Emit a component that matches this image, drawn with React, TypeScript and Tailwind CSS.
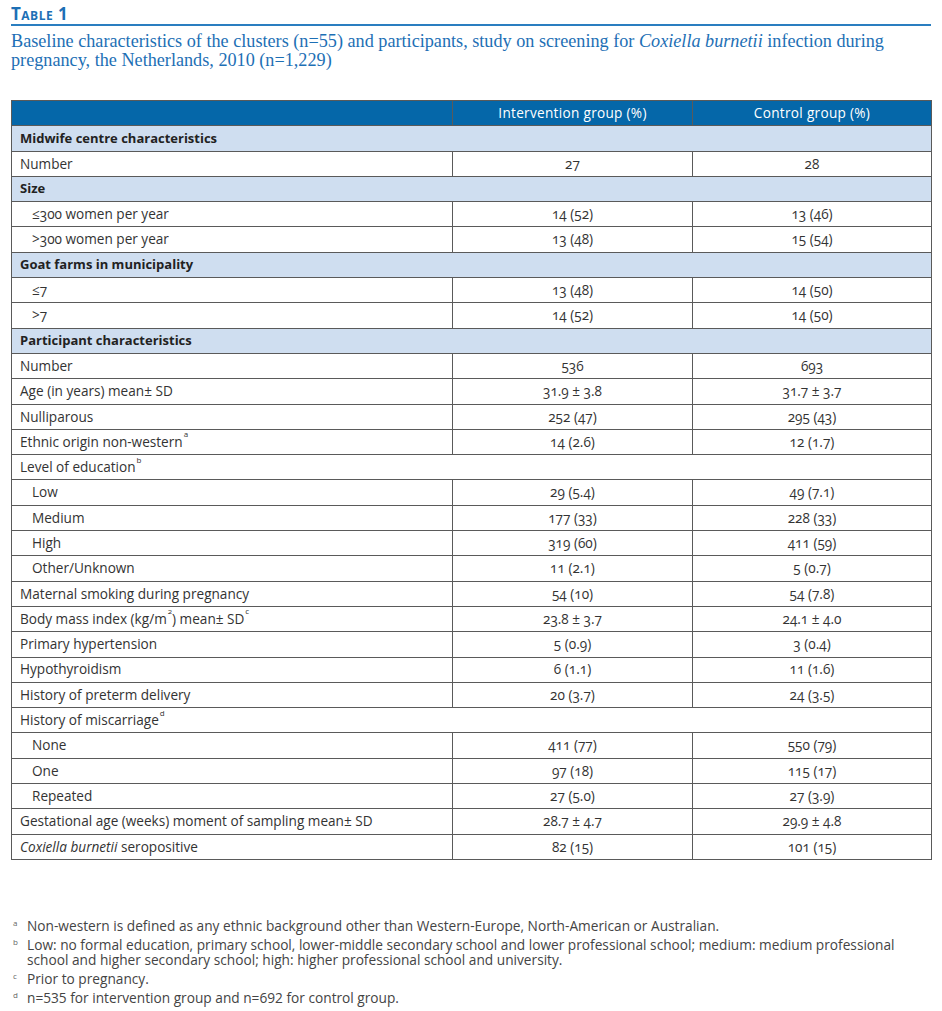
import React from 'react';

type Row =
  | { kind: 'section'; label: string }
  | { kind: 'data'; label: React.ReactNode; a: string; b: string; indent?: boolean }
  | { kind: 'plain'; label: React.ReactNode };

const Sup = ({ children }: { children: React.ReactNode }) => (
  <sup className="text-[8px] align-super leading-none ml-[1px]">{children}</sup>
);

const rows: Row[] = [
  { kind: 'section', label: 'Midwife centre characteristics' },
  { kind: 'data', label: 'Number', a: '27', b: '28' },
  { kind: 'section', label: 'Size' },
  { kind: 'data', label: '≤300 women per year', a: '14 (52)', b: '13 (46)', indent: true },
  { kind: 'data', label: '>300 women per year', a: '13 (48)', b: '15 (54)', indent: true },
  { kind: 'section', label: 'Goat farms in municipality' },
  { kind: 'data', label: '≤7', a: '13 (48)', b: '14 (50)', indent: true },
  { kind: 'data', label: '>7', a: '14 (52)', b: '14 (50)', indent: true },
  { kind: 'section', label: 'Participant characteristics' },
  { kind: 'data', label: 'Number', a: '536', b: '693' },
  { kind: 'data', label: 'Age (in years) mean± SD', a: '31.9 ± 3.8', b: '31.7 ± 3.7' },
  { kind: 'data', label: 'Nulliparous', a: '252 (47)', b: '295 (43)' },
  { kind: 'data', label: <>Ethnic origin non-western<Sup>a</Sup></>, a: '14 (2.6)', b: '12 (1.7)' },
  { kind: 'plain', label: <>Level of education<Sup>b</Sup></> },
  { kind: 'data', label: 'Low', a: '29 (5.4)', b: '49 (7.1)', indent: true },
  { kind: 'data', label: 'Medium', a: '177 (33)', b: '228 (33)', indent: true },
  { kind: 'data', label: 'High', a: '319 (60)', b: '411 (59)', indent: true },
  { kind: 'data', label: 'Other/Unknown', a: '11 (2.1)', b: '5 (0.7)', indent: true },
  { kind: 'data', label: 'Maternal smoking during pregnancy', a: '54 (10)', b: '54 (7.8)' },
  { kind: 'data', label: <>Body mass index (kg/m<Sup>2</Sup>) mean± SD<Sup>c</Sup></>, a: '23.8 ± 3.7', b: '24.1 ± 4.0' },
  { kind: 'data', label: 'Primary hypertension', a: '5 (0.9)', b: '3 (0.4)' },
  { kind: 'data', label: 'Hypothyroidism', a: '6 (1.1)', b: '11 (1.6)' },
  { kind: 'data', label: 'History of preterm delivery', a: '20 (3.7)', b: '24 (3.5)' },
  { kind: 'plain', label: <>History of miscarriage<Sup>d</Sup></> },
  { kind: 'data', label: 'None', a: '411 (77)', b: '550 (79)', indent: true },
  { kind: 'data', label: 'One', a: '97 (18)', b: '115 (17)', indent: true },
  { kind: 'data', label: 'Repeated', a: '27 (5.0)', b: '27 (3.9)', indent: true },
  { kind: 'data', label: 'Gestational age (weeks) moment of sampling mean± SD', a: '28.7 ± 4.7', b: '29.9 ± 4.8' },
  { kind: 'data', label: <><i>Coxiella burnetii</i> seropositive</>, a: '82 (15)', b: '101 (15)' },
];

const notes: { k: string; text: string }[] = [
  { k: 'a', text: 'Non-western is defined as any ethnic background other than Western-Europe, North-American or Australian.' },
  { k: 'b', text: 'Low: no formal education, primary school, lower-middle secondary school and lower professional school; medium: medium professional school and higher secondary school; high: higher professional school and university.' },
  { k: 'c', text: 'Prior to pregnancy.' },
  { k: 'd', text: 'n=535 for intervention group and n=692 for control group.' },
];

export default function App() {
  return (
    <div className="w-[942px] h-[1011px] bg-white overflow-hidden font-['Open_Sans',sans-serif] text-[#333]">
      {/* Heading */}
      <div className="pl-[11px] pr-[11px] pt-[4px]">
        <div className="text-[17px] font-bold text-[#1d6fb5] [font-variant:small-caps] leading-[20px] tracking-[0.5px]">
          Table 1
        </div>
        <div className="h-[2px] bg-[#2a7ec0]" />
        <p className="mt-[6px] font-['Liberation_Serif',serif] text-[18.2px] leading-[19px] text-[#1d6fb5]">
          Baseline characteristics of the clusters (n=55) and participants, study on screening for <i>Coxiella burnetii</i> infection during pregnancy, the Netherlands, 2010 (n=1,229)
        </p>
      </div>

      {/* Table */}
      <table className="ml-[11px] mt-[30px] w-[920px] border-collapse text-[13.6px] table-fixed oldstyle-nums">
        <colgroup>
          <col className="w-[441px]" />
          <col className="w-[240px]" />
          <col className="w-[239px]" />
        </colgroup>
        <thead>
          <tr className="h-[25.3px] bg-[#0567a9] text-white">
            <th className="border border-[#5a5a5a]" />
            <th className="border border-[#5a5a5a] font-normal tracking-[0.3px]">Intervention group (%)</th>
            <th className="border border-[#5a5a5a] font-normal tracking-[0.3px]">Control group (%)</th>
          </tr>
        </thead>
        <tbody>
          {rows.map((r, i) => {
            if (r.kind === 'section') {
              return (
                <tr key={i} className="h-[25.3px] bg-[#cfdef0]">
                  <td colSpan={3} className="border border-[#5a5a5a] pl-[8px] text-[13px] font-bold text-[#222]">
                    {r.label}
                  </td>
                </tr>
              );
            }
            if (r.kind === 'plain') {
              return (
                <tr key={i} className="h-[25.3px]">
                  <td colSpan={3} className="border border-[#5a5a5a] pl-[8px]">
                    {r.label}
                  </td>
                </tr>
              );
            }
            return (
              <tr key={i} className="h-[25.3px]">
                <td className={`border border-[#5a5a5a] ${r.indent ? 'pl-[20px]' : 'pl-[8px]'}`}>{r.label}</td>
                <td className="border border-[#5a5a5a] text-center">{r.a}</td>
                <td className="border border-[#5a5a5a] text-center">{r.b}</td>
              </tr>
            );
          })}
        </tbody>
      </table>

      {/* Footnotes */}
      <div className="mt-[58px] pl-[13px] pr-[20px] text-[13.7px] leading-[15px] text-[#444] flex flex-col gap-[4px]">
        {notes.map((n) => (
          <div key={n.k} className="flex">
            <span className="w-[14px] shrink-0 text-[8px] leading-[10px] text-[#666]">{n.k}</span>
            <span>{n.text}</span>
          </div>
        ))}
      </div>
    </div>
  );
}
